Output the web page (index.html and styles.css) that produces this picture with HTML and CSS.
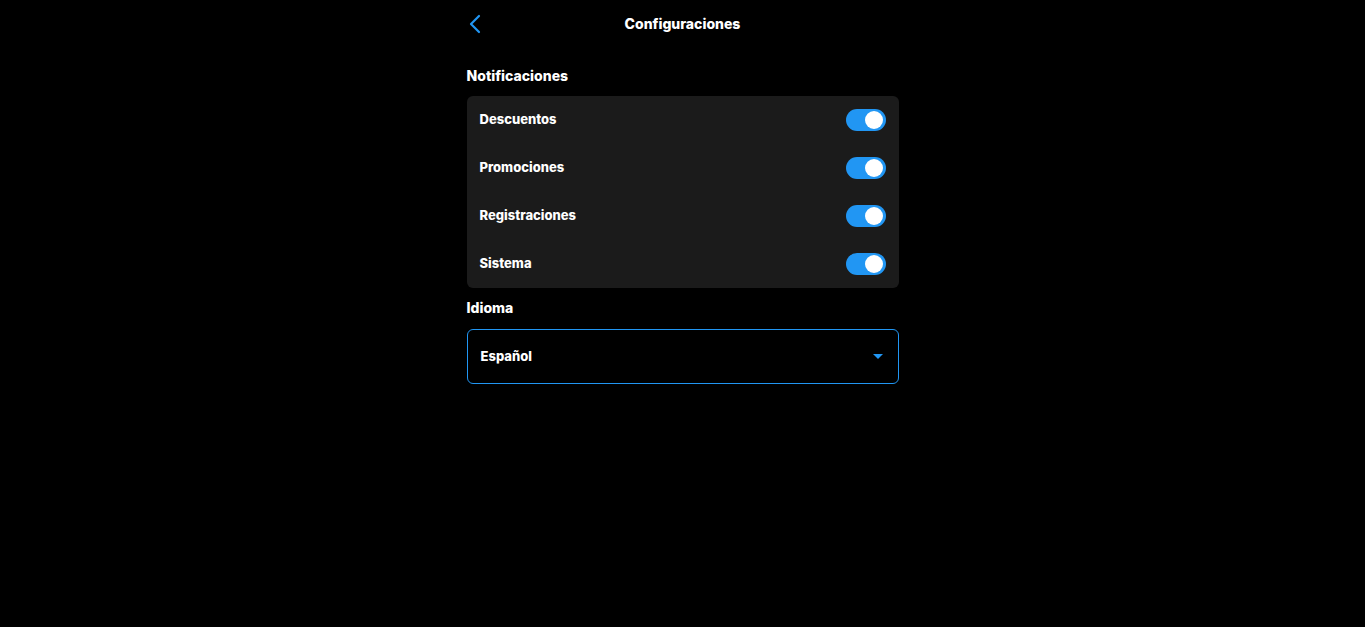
FILE: index.html
```html
<!DOCTYPE html>
<html lang="es">
<head>
<meta charset="utf-8">
<title>Configuraciones</title>
<link rel="stylesheet" href="styles.css">
</head>
<body>
<div class="page">
  <header class="topbar">
    <button class="back" aria-label="Volver">
      <svg width="14" height="20" viewBox="0 0 14 20"><path d="M11 2 L3 10 L11 18" fill="none" stroke="#2196f3" stroke-width="2.2" stroke-linecap="round" stroke-linejoin="round"/></svg>
    </button>
    <h1 class="title">Configuraciones</h1>
  </header>

  <h2 class="section-title">Notificaciones</h2>
  <div class="card">
    <div class="row"><span class="label">Descuentos</span><span class="toggle"><span class="knob"></span></span></div>
    <div class="row"><span class="label">Promociones</span><span class="toggle"><span class="knob"></span></span></div>
    <div class="row"><span class="label">Registraciones</span><span class="toggle"><span class="knob"></span></span></div>
    <div class="row"><span class="label">Sistema</span><span class="toggle"><span class="knob"></span></span></div>
  </div>

  <h2 class="section-title lang">Idioma</h2>
  <div class="select">
    <span class="select-value">Español</span>
    <svg class="caret" width="10" height="6" viewBox="0 0 10 6"><path d="M0 0 H10 L5 5 Z" fill="#2196f3"/></svg>
  </div>
</div>
</body>
</html>
```

FILE: styles.css
```css
* { box-sizing: border-box; }
html, body { margin: 0; padding: 0; background: #000; }
body {
  font-family: Inter, "Noto Sans", sans-serif;
  color: #fff;
}
.page {
  width: 432px;
  margin: 0 auto;
  padding-top: 5px;
}
.topbar {
  position: relative;
  height: 38px;
  display: flex;
  align-items: center;
  justify-content: center;
}
.back {
  position: absolute;
  left: 1px;
  top: 9px;
  background: none;
  border: 0;
  padding: 0;
  width: 16px;
  height: 20px;
  display: flex;
  align-items: center;
  cursor: pointer;
}
.title {
  margin: 0;
  font-size: 14px;
  font-weight: 800;
  margin-top: -1px;
}
.section-title {
  margin: 23px 0 10px;
  font-size: 14px;
  font-weight: 800;
  line-height: 20px;
}
.section-title.lang { margin-top: 10px; margin-bottom: 11px; }
.card {
  background: #1b1b1b;
  border-radius: 6px;
}
.row {
  height: 48px;
  display: flex;
  align-items: center;
  justify-content: space-between;
  padding: 0 13px;
}
.label {
  font-size: 13px;
  font-weight: 800;
  margin-top: -2px;
}
.toggle {
  width: 40px;
  height: 22px;
  border-radius: 11px;
  background: #2196f3;
  display: flex;
  align-items: center;
  justify-content: flex-end;
  padding: 0 3px;
}
.knob {
  width: 18px;
  height: 18px;
  border-radius: 50%;
  background: #fff;
}
.select {
  height: 55px;
  border: 1px solid #2196f3;
  border-radius: 6px;
  display: flex;
  align-items: center;
  justify-content: space-between;
  padding: 0 15px 0 13px;
}
.select-value {
  font-size: 13px;
  font-weight: 800;
  margin-top: -1px;
}
.caret { margin-top: 0; }
```
